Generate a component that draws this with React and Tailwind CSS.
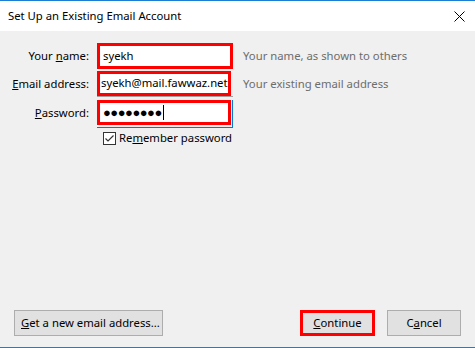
export default function App() {
  const font = { fontFamily: '"Noto Sans", "Open Sans", sans-serif' };
  return (
    <div className="w-[475px] h-[348px] flex flex-col bg-[#f0f0f0] text-[11.3px] text-black overflow-hidden" style={font}>
      <div className="h-[31px] bg-white border-t border-[#1a7fd4] flex items-center justify-between pl-[8px] pr-[10px] shrink-0">
        <span className="leading-none">Set Up an Existing Email Account</span>
        <svg width="11" height="11" viewBox="0 0 11 11" className="text-black">
          <path d="M0.5 0.5 L10.5 10.5 M10.5 0.5 L0.5 10.5" stroke="currentColor" strokeWidth="1" />
        </svg>
      </div>
      <div className="flex-1 flex flex-col">
        <div className="grid grid-cols-[89px_136px_auto] gap-x-[8px] gap-y-[2px] pt-[12px] items-center">
          <div className="text-right">Your <span className="underline">n</span>ame:</div>
          <div className="h-[26px] border-[3px] border-[#ff0000] bg-white flex items-center pl-[3px]">syekh</div>
          <div className="text-[#6d6d6d] pl-[2px] whitespace-nowrap">Your name, as shown to others</div>

          <div className="text-right whitespace-nowrap"><span className="underline">E</span>mail address:</div>
          <div className="h-[26px] border-b border-[#a0a0a0]">
            <div className="h-[25px] w-[134px] border-[3px] border-[#ff0000] bg-white flex items-center pl-[1px] whitespace-nowrap overflow-hidden">syekh@mail.fawwaz.net</div>
          </div>
          <div className="text-[#6d6d6d] pl-[2px] whitespace-nowrap">Your existing email address</div>

          <div className="text-right"><span className="underline">P</span>assword:</div>
          <div className="h-[28px] border-r border-b border-[#0078d7] mt-[1px]">
            <div className="h-[25px] w-[134px] border-[3px] border-[#ff0000] bg-white flex items-center pl-[3px]">
              <span className="tracking-[-0.5px] text-[13px] leading-none">●●●●●●●●</span>
              <span className="w-px h-[15px] bg-black ml-px"></span>
            </div>
          </div>
          <div></div>

          <div></div>
          <div className="flex items-center gap-[3px] pl-[6px] col-span-2">
            <div className="w-[13px] h-[13px] border border-[#333333] bg-white flex items-center justify-center">
              <svg width="11" height="11" viewBox="0 0 11 11">
                <path d="M1.5 5.5 L4 8 L9.5 2.5" stroke="#333" strokeWidth="1.2" fill="none" />
              </svg>
            </div>
            <span>Re<span className="underline">m</span>ember password</span>
          </div>
        </div>
        <div className="flex-1"></div>
        <div className="flex items-center pl-[14px] pr-[14px] pb-[11px]">
          <button className="h-[26px] px-[6px] bg-[#e1e1e1] border border-[#adadad] w-[149px] text-left whitespace-nowrap">
            <span className="underline">G</span>et a new email address...
          </button>
          <div className="flex-1"></div>
          <button className="h-[26px] w-[75px] bg-[#e1e1e1] border-[3px] border-[#ff0000]">
            <span className="underline">C</span>ontinue
          </button>
          <button className="h-[26px] w-[74px] ml-[12px] bg-[#e1e1e1] border border-[#adadad]">
            C<span className="underline">a</span>ncel
          </button>
        </div>
        <div className="h-px bg-[#1a7fd4]"></div>
      </div>
    </div>
  );
}
